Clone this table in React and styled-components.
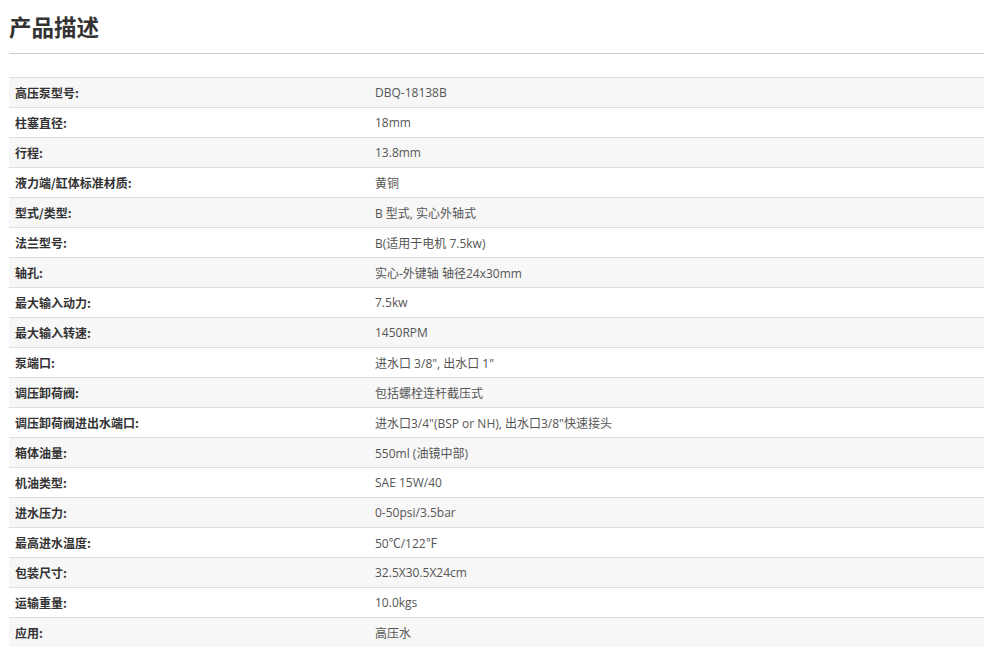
import styled, { createGlobalStyle } from "styled-components";

const specs = [
  ["高压泵型号:", "DBQ-18138B"],
  ["柱塞直径:", "18mm"],
  ["行程:", "13.8mm"],
  ["液力端/缸体标准材质:", "黄铜"],
  ["型式/类型:", "B 型式, 实心外轴式"],
  ["法兰型号:", "B(适用于电机 7.5kw)"],
  ["轴孔:", "实心-外键轴 轴径24x30mm"],
  ["最大输入动力:", "7.5kw"],
  ["最大输入转速:", "1450RPM"],
  ["泵端口:", "进水口 3/8\", 出水口 1\""],
  ["调压卸荷阀:", "包括螺栓连杆截压式"],
  ["调压卸荷阀进出水端口:", "进水口3/4\"(BSP or NH), 出水口3/8\"快速接头"],
  ["箱体油量:", "550ml (油镜中部)"],
  ["机油类型:", "SAE 15W/40"],
  ["进水压力:", "0-50psi/3.5bar"],
  ["最高进水温度:", "50℃/122℉"],
  ["包装尺寸:", "32.5X30.5X24cm"],
  ["运输重量:", "10.0kgs"],
  ["应用:", "高压水"],
];

const App = () => {
  return (
    <>
      <GlobalStyle />
      <Section>
        <Title>产品描述</Title>
        <SpecTable>
          <tbody>
            {specs.map(([label, value], i) => (
              <Row key={label} $striped={i % 2 === 0}>
                <Label>{label}</Label>
                <Value>{value}</Value>
              </Row>
            ))}
          </tbody>
        </SpecTable>
      </Section>
    </>
  );
};

export default App;

// style
const GlobalStyle = createGlobalStyle`
  body {
    margin: 0;
    background: #fff;
    font-family: "Open Sans", "Noto Sans CJK SC", sans-serif;
  }
`;
const Section = styled.div`
  padding: 0 4px 0 9px;
`;
const Title = styled.h2`
  margin: 0;
  padding: 12px 0 12px;
  font-size: 22.5px;
  line-height: 29px;
  font-weight: 700;
  color: #333;
  font-family: "Noto Sans CJK SC", sans-serif;
  border-bottom: 1px solid #ccc;
`;
const SpecTable = styled.table`
  width: 100%;
  margin-top: 23px;
  border-collapse: collapse;
`;
const Row = styled.tr`
  background: ${({ $striped }) => ($striped ? "#f7f7f7" : "#fff")};
  border-top: 1px solid #ddd;
`;
const Label = styled.td`
  width: 348px;
  height: 29px;
  padding: 0 6px;
  font-family: "Noto Sans CJK SC", sans-serif;
  font-size: 12px;
  font-weight: 700;
  color: #333;
`;
const Value = styled.td`
  padding: 0 6px;
  font-size: 12px;
  color: #555;
`;
